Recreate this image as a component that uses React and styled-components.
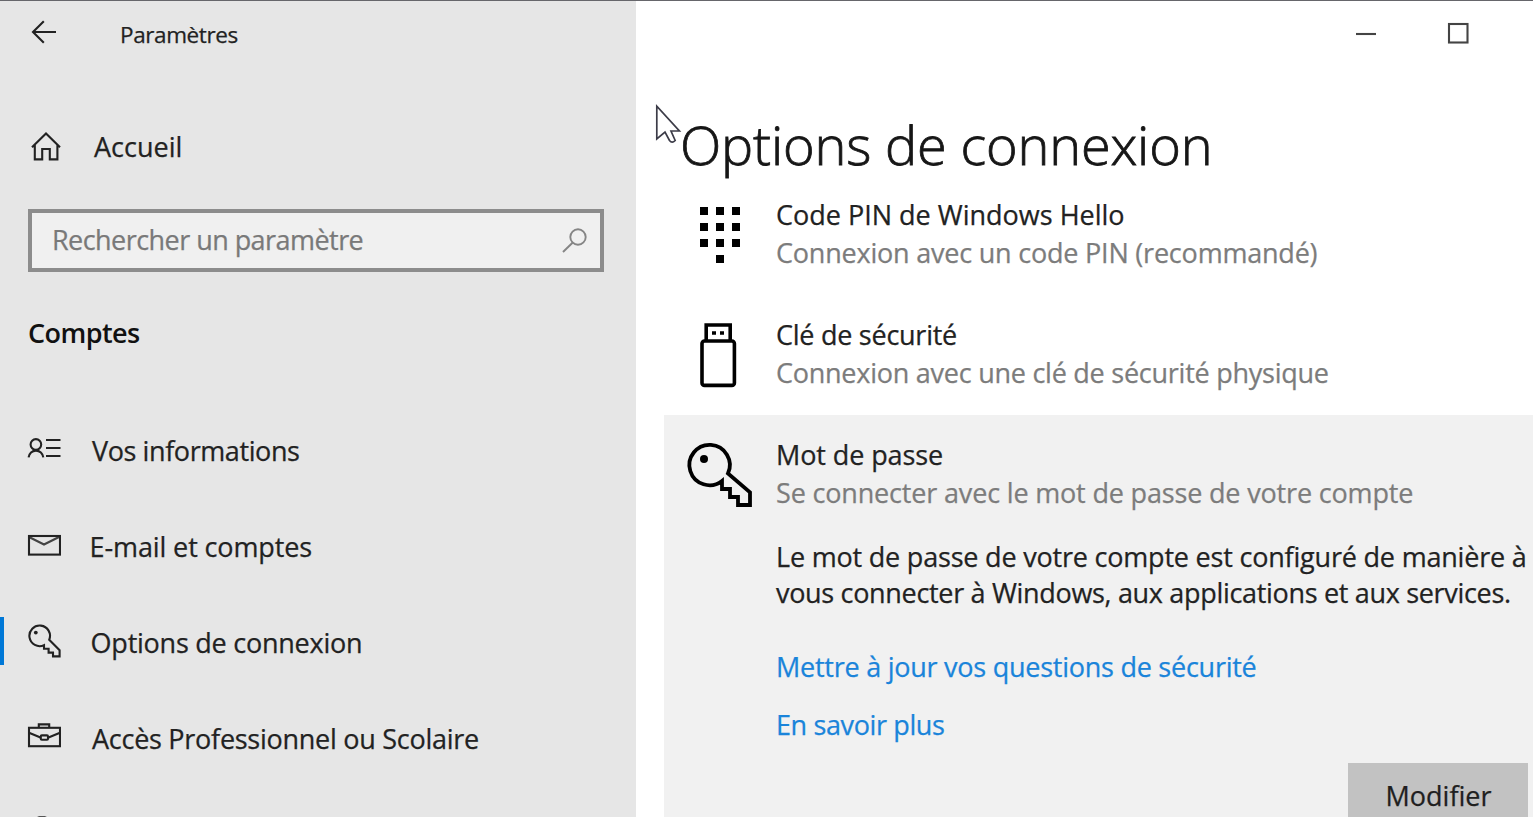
import React from 'react';
import styled, { createGlobalStyle } from 'styled-components';

const GlobalStyle = createGlobalStyle`
  * { box-sizing: border-box; }
  body {
    margin: 0;
    overflow: hidden;
    font-family: "Open Sans", "Noto Sans", sans-serif;
    font-size: 27px;
    color: #222;
    -webkit-text-stroke: 0.25px currentColor;
  }
`;

const Window = styled.div`
  position: relative;
  display: flex;
  width: 1533px;
  height: 817px;
  overflow: hidden;
  background: #fff;
  border-top: 1px solid #66666b;
`;

const Label = styled.span`
  white-space: nowrap;
  letter-spacing: ${(p) => p.$track || 0}px;
`;

const Sidebar = styled.aside`
  display: flex;
  flex-direction: column;
  flex: none;
  width: 636px;
  background: #e6e6e6;
`;

const AppBar = styled.header`
  display: flex;
  flex: none;
  align-items: center;
  height: 67px;
  padding-left: 30px;
  font-size: 22.5px;
  gap: 62px;
`;

const BackIcon = styled.svg`
  width: 28px;
  height: 28px;
  margin-top: -5px;
`;

const HomeLink = styled.a`
  display: flex;
  flex: none;
  align-items: center;
  height: 60px;
  margin-top: 48px;
  padding: 1px 0 0 30px;
  gap: 32px;
`;

const HomeIcon = styled.svg`
  width: 32px;
  height: 32px;
`;

const SearchBox = styled.div`
  display: flex;
  flex: none;
  align-items: center;
  justify-content: space-between;
  width: 576px;
  height: 63px;
  margin: 33px 0 0 28px;
  padding: 0 12px 2px 20px;
  border: 4px solid #8c8c8c;
  background: #f0f0f0;
  color: #797979;
`;

const SearchIcon = styled.svg`
  width: 28px;
  height: 28px;
`;

const Category = styled.h2`
  flex: none;
  margin: 41px 0 0 28px;
  font-size: 27px;
  font-weight: 600;
  line-height: 40px;
  color: #111;
  -webkit-text-stroke: 0;
`;

const Nav = styled.nav`
  display: flex;
  flex-direction: column;
  flex: none;
  margin-top: 48px;
`;

const NavRow = styled.a`
  display: flex;
  align-items: center;
  height: 96px;
`;

const Marker = styled.i`
  width: 4px;
  height: 48px;
  margin-right: 23px;
  background: ${(p) => (p.$active ? '#0078d7' : 'transparent')};
`;

const NavIcon = styled.svg`
  flex: none;
  width: 34px;
  height: 34px;
  margin-right: ${(p) => p.$gap}px;
`;

const NavText = styled(Label)`
  padding-top: 3px;
`;

const Main = styled.main`
  display: flex;
  flex-direction: column;
  flex: 1;
  min-width: 0;
`;

const WindowControls = styled.div`
  display: flex;
  flex: none;
  justify-content: flex-end;
  align-items: center;
  height: 67px;
  padding-right: 64px;
  gap: 70px;
`;

const ControlIcon = styled.svg`
  width: 22px;
  height: 22px;
  margin-top: -3px;
`;

const Title = styled.h1`
  flex: none;
  margin: 46px 0 0 44px;
  font-size: 54px;
  font-weight: 300;
  line-height: 61px;
  letter-spacing: -0.16px;
  white-space: nowrap;
  color: #161616;
  -webkit-text-stroke: 0.8px currentColor;
`;

const Card = styled.section`
  display: flex;
  flex-direction: column;
  flex: none;
  margin-left: 28px;
  padding-bottom: 40px;
  background: ${(p) => (p.$open ? '#f1f1f1' : 'transparent')};
`;

const OptionRow = styled.div`
  display: flex;
  flex: none;
  height: 120px;
  margin-left: ${(p) => (p.$inset ? 0 : 28)}px;
  padding: 20px 0 0 20px;
`;

const OptionIcon = styled.svg`
  flex: none;
  width: 72px;
  height: 76px;
  margin-right: 20px;
`;

const OptionText = styled.div`
  display: flex;
  flex-direction: column;
  padding-top: 1px;
  line-height: 38px;
`;

const Hint = styled(Label)`
  color: #7c7c7c;
`;

const Details = styled.div`
  display: flex;
  flex-direction: column;
  padding: 4px 0 0 112px;
  line-height: 36px;
`;

const Link = styled.a`
  margin-top: ${(p) => p.$top}px;
  line-height: 38px;
  color: #1a84da;
`;

const Button = styled.button`
  align-self: flex-end;
  flex: none;
  width: 180px;
  height: 64px;
  margin: 19px 5px 0 0;
  padding: 0 0 0 1px;
  border: 0;
  background: #c2c2c2;
  color: #1f1f1f;
  font: inherit;
`;

const Pointer = styled.svg`
  position: absolute;
  left: 654px;
  top: 102px;
  width: 28px;
  height: 42px;
`;

const stroke = { fill: 'none', stroke: '#222', strokeWidth: 2.1 };

const icons = {
  person: (
    <g {...stroke}>
      <circle cx="8.9" cy="12.4" r="5.3" />
      <path d="M1.6 25.4a7.4 7.7 0 0 1 14.7 0M19 8h14.5M19 16h14.5M19 24h14.5" />
    </g>
  ),
  mail: (
    <g {...stroke}>
      <path d="M2 9l15 7.5L32 9" stroke="#444" />
      <rect x="2" y="8" width="31" height="18.6" />
    </g>
  ),
  key: (
    <g {...stroke}>
      <path d="M17 21.2A10.3 10.3 0 1 1 22.2 15.8L32.6 26.2V32.4H26V28.6H21.6V24.8H17Z" />
      <circle cx="8.8" cy="8.6" r="1.9" fill="#222" stroke="none" />
    </g>
  ),
  briefcase: (
    <g {...stroke}>
      <rect x="2" y="7.8" width="31" height="18.4" />
      <path d="M11.8 7.5V4.4h10.4V7.5M2 12.8l11.5 4.7M33 12.8l-11.5 4.7" />
      <rect x="13.8" y="15.4" width="7.2" height="4.4" rx="1" />
    </g>
  ),
  family: <circle cx="15" cy="8.6" r="8" {...stroke} stroke="#555" />,
};

const navItems = [
  { icon: 'person', text: 'Vos informations', track: -0.41, gap: 31 },
  { icon: 'mail', text: 'E-mail et comptes', track: -0.12, gap: 28.6 },
  { icon: 'key', text: 'Options de connexion', track: -0.24, gap: 29.6, active: true },
  { icon: 'briefcase', text: 'Accès Professionnel ou Scolaire', track: -0.27, gap: 31 },
  { icon: 'family', text: '', gap: 31 },
];

const pinDots = [[8, 8], [24, 8], [40, 8], [8, 24], [24, 24], [40, 24], [8, 40], [24, 40], [40, 40], [24, 56]];

export default function App() {
  return (
    <>
      <GlobalStyle />
      <Window>
        <Sidebar>
          <AppBar>
            <BackIcon viewBox="0 0 28 28" {...stroke}>
              <path d="M26 14H3M13.8 3.2L3 14L13.8 24.8" />
            </BackIcon>
            <Label $track={-0.4}>Paramètres</Label>
          </AppBar>
          <HomeLink>
            <HomeIcon viewBox="0 0 32 32" {...stroke}>
              <path d="M2 16.2L16 2.4L30 16.2M4.8 14V28.4H12.2V18H19.8V28.4H27.4V14" />
            </HomeIcon>
            <Label>Accueil</Label>
          </HomeLink>
          <SearchBox>
            <Label $track={-0.55}>Rechercher un paramètre</Label>
            <SearchIcon viewBox="0 0 28 28" fill="none" stroke="#858585" strokeWidth="1.9">
              <circle cx="18" cy="11" r="7.7" />
              <path d="M12.8 16.5L3 26" />
            </SearchIcon>
          </SearchBox>
          <Category><Label $track={-0.56}>Comptes</Label></Category>
          <Nav>
            {navItems.map((item) => (
              <NavRow key={item.icon}>
                <Marker $active={item.active} />
                <NavIcon viewBox="0 0 34 34" $gap={item.gap}>{icons[item.icon]}</NavIcon>
                <NavText $track={item.track}>{item.text}</NavText>
              </NavRow>
            ))}
          </Nav>
        </Sidebar>

        <Main>
          <WindowControls>
            <ControlIcon viewBox="0 0 22 22"><path d="M1 12H21" {...stroke} stroke="#444" /></ControlIcon>
            <ControlIcon viewBox="0 0 22 22"><rect x="2" y="2" width="18.5" height="18.5" {...stroke} stroke="#444" /></ControlIcon>
          </WindowControls>
          <Title>Options de connexion</Title>
          <OptionRow>
            <OptionIcon viewBox="0 0 72 76">
              {pinDots.map(([x, y]) => (
                <rect key={`${x}-${y}`} x={x + 8} y={y + 4} width="8" height="8" />
              ))}
            </OptionIcon>
            <OptionText>
              <Label>Code PIN de Windows Hello</Label>
              <Hint $track={-0.21}>Connexion avec un code PIN (recommandé)</Hint>
            </OptionText>
          </OptionRow>
          <OptionRow>
            <OptionIcon viewBox="0 0 72 76" fill="none" stroke="#000" strokeWidth="3.6">
              <path d="M22.2 25V10H46.2V25" />
              <rect x="18" y="26" width="32.4" height="44.4" rx="2.5" />
              <path d="M28 18h4M36 18h4" />
            </OptionIcon>
            <OptionText>
              <Label $track={-0.26}>Clé de sécurité</Label>
              <Hint $track={-0.25}>Connexion avec une clé de sécurité physique</Hint>
            </OptionText>
          </OptionRow>
          <Card $open>
            <OptionRow $inset>
              <OptionIcon viewBox="0 0 72 76" fill="none" stroke="#000" strokeWidth="3.8">
                <path d="M38 46A20.2 20.2 0 1 1 44 38.4L66 57.4V70H54V62H46V54H38Z" />
                <circle cx="20" cy="24" r="4" fill="#000" stroke="none" />
              </OptionIcon>
              <OptionText>
                <Label $track={-0.1}>Mot de passe</Label>
                <Hint $track={-0.17}>Se connecter avec le mot de passe de votre compte</Hint>
              </OptionText>
            </OptionRow>
            <Details>
              <Label $track={-0.2}>Le mot de passe de votre compte est configuré de manière à</Label>
              <Label $track={-0.32}>vous connecter à Windows, aux applications et aux services.</Label>
              <Link $top={37}><Label $track={-0.25}>Mettre à jour vos questions de sécurité</Label></Link>
              <Link $top={20}><Label $track={-0.38}>En savoir plus</Label></Link>
            </Details>
            <Button>Modifier</Button>
          </Card>
        </Main>

        <Pointer viewBox="0 0 28 42">
          <path
            d="M2.8 3.2V36L11 29L15.5 37.5Q18 40.8 21.2 37.5L17 28H25.4Z"
            fill="#fff"
            stroke="#3c3c48"
            strokeWidth="1.7"
          />
        </Pointer>
      </Window>
    </>
  );
}
